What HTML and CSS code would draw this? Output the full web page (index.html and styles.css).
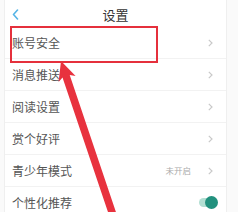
FILE: index.html
```html
<!DOCTYPE html>
<html lang="zh">
<head>
<meta charset="utf-8">
<link rel="stylesheet" href="styles.css">
</head>
<body>
<div class="page">
  <div class="card">
    <div class="header">
      <svg class="back" width="7" height="11" viewBox="0 0 7 11"><polyline points="5.5,1 1.5,5.5 5.5,10" fill="none" stroke="#56b4e6" stroke-width="1.6" stroke-linecap="round" stroke-linejoin="round"/></svg>
      <div class="title">设置</div>
    </div>
    <div class="row"><span class="label">账号安全</span><svg class="chev" width="5" height="8" viewBox="0 0 5 8"><polyline points="0.8,0.8 4,4 0.8,7.2" fill="none" stroke="#c9c9c9" stroke-width="1.2"/></svg></div>
    <div class="row"><span class="label">消息推送</span><svg class="chev" width="5" height="8" viewBox="0 0 5 8"><polyline points="0.8,0.8 4,4 0.8,7.2" fill="none" stroke="#c9c9c9" stroke-width="1.2"/></svg></div>
    <div class="row"><span class="label">阅读设置</span><svg class="chev" width="5" height="8" viewBox="0 0 5 8"><polyline points="0.8,0.8 4,4 0.8,7.2" fill="none" stroke="#c9c9c9" stroke-width="1.2"/></svg></div>
    <div class="row"><span class="label">赏个好评</span><svg class="chev" width="5" height="8" viewBox="0 0 5 8"><polyline points="0.8,0.8 4,4 0.8,7.2" fill="none" stroke="#c9c9c9" stroke-width="1.2"/></svg></div>
    <div class="row"><span class="label">青少年模式</span><span class="value">未开启</span><svg class="chev" width="5" height="8" viewBox="0 0 5 8"><polyline points="0.8,0.8 4,4 0.8,7.2" fill="none" stroke="#c9c9c9" stroke-width="1.2"/></svg></div>
    <div class="row"><span class="label">个性化推荐</span><span class="toggle"><span class="knob"></span></span></div>
  </div>
  <svg class="overlay" width="238" height="212" viewBox="0 0 238 212">
    <rect x="11" y="27" width="146" height="35" fill="none" stroke="#e5303c" stroke-width="2"/>
    <polygon points="61,61 75.6,76.1 69.7,75 116.6,214 109.4,216.2 62.5,77.4 58.6,81.9" fill="#e8323e"/>
  </svg>
</div>
</body>
</html>
```
FILE: styles.css
```css
* { box-sizing: border-box; }
html, body { margin: 0; padding: 0; }
body {
  width: 238px;
  height: 212px;
  overflow: hidden;
  background: #fafafa;
  font-family: "Noto Sans CJK SC", "Noto Sans", sans-serif;
}
.page {
  position: relative;
  width: 238px;
  height: 212px;
}
.card {
  margin-left: 4px;
  width: 223px;
  height: 212px;
  background: #fff;
  border-left: 1px solid #efefef;
  border-right: 1px solid #efefef;
}
.header {
  height: 27px;
  display: flex;
  align-items: center;
  padding-left: 7px;
  position: relative;
}
.back { display: block; margin-top: 1px; }
.title {
  flex: 1;
  text-align: center;
  font-size: 13px;
  color: #333;
  margin-left: -7px;
  padding-right: 7px;
  margin-top: 2px;
  line-height: 1;
}
.row {
  height: 32px;
  display: flex;
  align-items: center;
  padding-left: 7px;
  padding-right: 13px;
  border-bottom: 1px solid #f2f2f2;
}
.label {
  flex: 1;
  font-size: 12px;
  color: #555;
  line-height: 1;
}
.value {
  font-size: 8.5px;
  color: #aaa;
  margin-right: 17px;
  line-height: 1;
}
.chev { display: block; }
.toggle {
  position: relative;
  width: 19px;
  height: 13px;
  margin-right: -5px;
  display: flex;
  align-items: center;
}
.toggle::before {
  content: "";
  display: block;
  width: 16px;
  height: 9px;
  border-radius: 5px;
  background: #b3dfd3;
}
.knob {
  position: absolute;
  right: 0;
  top: 0;
  width: 13px;
  height: 13px;
  border-radius: 50%;
  background: #22917e;
}
.overlay {
  position: absolute;
  left: 0;
  top: 0;
  pointer-events: none;
}
```
